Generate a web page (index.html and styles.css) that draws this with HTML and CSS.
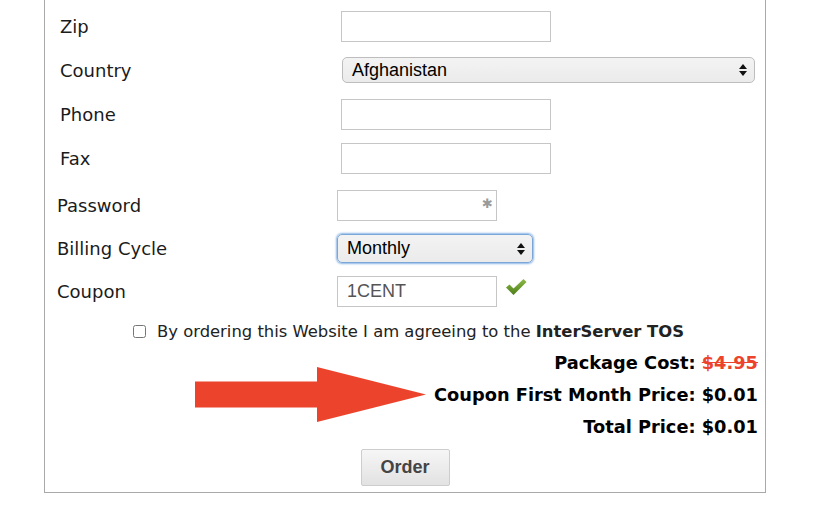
FILE: index.html
```html
<!DOCTYPE html>
<html lang="en">
<head>
  <meta charset="UTF-8" />
  <title>Order Website</title>
  <link rel="stylesheet" href="styles.css">
</head>
<body>

  <div class="order-box">
    <div class="fields fields-contact">
      <div class="row">
        <label>Zip</label>
        <input type="text" class="text-input">
      </div>
      <div class="row">
        <label>Country</label>
        <div class="select select-wide"><span>Afghanistan</span><i class="updown"></i></div>
      </div>
      <div class="row">
        <label>Phone</label>
        <input type="text" class="text-input">
      </div>
      <div class="row">
        <label>Fax</label>
        <input type="text" class="text-input">
      </div>
    </div>

    <div class="fields fields-account">
      <div class="row">
        <label>Password</label>
        <div class="pass-wrap">
          <input type="password" class="text-input small">
          <span class="required">&#10033;</span>
        </div>
      </div>
      <div class="row">
        <label>Billing Cycle</label>
        <div class="select select-focus"><span>Monthly</span><i class="updown"></i></div>
      </div>
      <div class="row">
        <label>Coupon</label>
        <input type="text" class="text-input small coupon" value="1CENT">
        <svg class="valid" width="22" height="18" viewBox="0 0 22 18">
          <defs>
            <linearGradient id="chk" x1="0" y1="0" x2="0" y2="1">
              <stop offset="0" stop-color="#8dbb45"/>
              <stop offset="1" stop-color="#4e7d1c"/>
            </linearGradient>
          </defs>
          <path d="M1 9.5 L4.5 6.5 L8.5 10.5 L18.5 1 L21.5 4 L8.5 17 Z" fill="url(#chk)"/>
        </svg>
      </div>
    </div>

    <div class="tos">
      <input type="checkbox" class="tos-check">
      <span>By ordering this Website I am agreeing to the <b>InterServer TOS</b></span>
    </div>

    <div class="totals">
      <p>Package Cost: <s class="old-price">$4.95</s></p>
      <p>Coupon First Month Price: $0.01</p>
      <p>Total Price: $0.01</p>
    </div>

    <div class="actions">
      <button class="order-btn">Order</button>
    </div>

    <!-- annotation arrow drawn over the form -->
    <svg class="arrow" width="231" height="56" viewBox="0 0 231 56">
      <polygon points="0,14.5 122,14.5 122,0 231,27.5 122,55 122,40.5 0,40.5" fill="#ec432c"/>
    </svg>
  </div>

</body>
</html>
```

FILE: styles.css
```css
body {
  margin: 0;
  padding: 0;
  background: #fff;
  font-family: "DejaVu Sans", Verdana, sans-serif;
  color: #1b1b1b;
}

.order-box {
  position: relative;
  margin-left: 44px;
  width: 720px;
  border: 1px solid #a9a9a9;
  border-top: none;
  padding: 4px 0 6px 0;
}

.fields .row {
  display: flex;
  align-items: center;
}

.fields-contact .row {
  height: 44px;
}

.fields-contact label {
  width: 281px;
  padding-left: 15px;
  font-size: 18px;
}

.fields-account .row {
  height: 43px;
}

.fields-account {
  margin-top: 4px;
}

.fields-account label {
  width: 280px;
  padding-left: 12px;
  font-size: 18px;
}

.text-input {
  box-sizing: border-box;
  width: 210px;
  height: 31px;
  border: 1px solid #c6c6c6;
  background: #fff;
  padding: 0 9px;
  font-family: "Liberation Sans", Arial, sans-serif;
  font-size: 18px;
  color: #555;
  outline: none;
}

.text-input.small {
  width: 160px;
}

.pass-wrap {
  position: relative;
}

.required {
  position: absolute;
  right: 4px;
  top: 6px;
  font-size: 13px;
  color: #9a9a9a;
}

.valid {
  margin-left: 8px;
  margin-top: -10px;
}

.select {
  box-sizing: border-box;
  position: relative;
  display: flex;
  align-items: center;
  height: 26px;
  padding-left: 9px;
  border: 1px solid #bdbdbd;
  border-radius: 5px;
  background: linear-gradient(#f3f3f3, #ebebeb);
  font-family: "Liberation Sans", Arial, sans-serif;
  font-size: 18px;
  color: #000;
}

.select-wide {
  width: 413px;
  margin-left: 1px;
}

.select-focus {
  width: 196px;
  height: 29px;
  border: 1px solid #7ba6d8;
  box-shadow: 0 0 2px 1px #8cb6e6;
}

.updown {
  position: absolute;
  right: 7px;
  top: 50%;
  width: 0;
  height: 0;
  margin-top: -6px;
  border-left: 4px solid transparent;
  border-right: 4px solid transparent;
  border-bottom: 5px solid #111;
}

.updown::after {
  content: "";
  position: absolute;
  left: -4px;
  top: 7px;
  border-left: 4px solid transparent;
  border-right: 4px solid transparent;
  border-top: 5px solid #111;
}

.tos {
  display: flex;
  align-items: center;
  height: 32px;
  margin-top: 2px;
  padding-left: 88px;
  font-size: 16.4px;
  color: #222;
}

.tos-check {
  margin: 0 11px 0 0;
  width: 13px;
  height: 13px;
}

.totals {
  text-align: right;
  padding-right: 7px;
}

.totals p {
  margin: 0;
  height: 32px;
  line-height: 32px;
  font-size: 17.8px;
  font-weight: bold;
  color: #000;
}

.old-price {
  color: #ec432c;
}

.actions {
  display: flex;
  justify-content: center;
  margin-top: 6px;
}

.order-btn {
  width: 89px;
  height: 37px;
  border: 1px solid #cdcdcd;
  border-radius: 2px;
  background: linear-gradient(#f6f6f6, #e2e2e2);
  font-family: "Liberation Sans", Arial, sans-serif;
  font-size: 18px;
  font-weight: bold;
  color: #444;
}

.arrow {
  position: absolute;
  left: 150px;
  top: 367px;
}
```
